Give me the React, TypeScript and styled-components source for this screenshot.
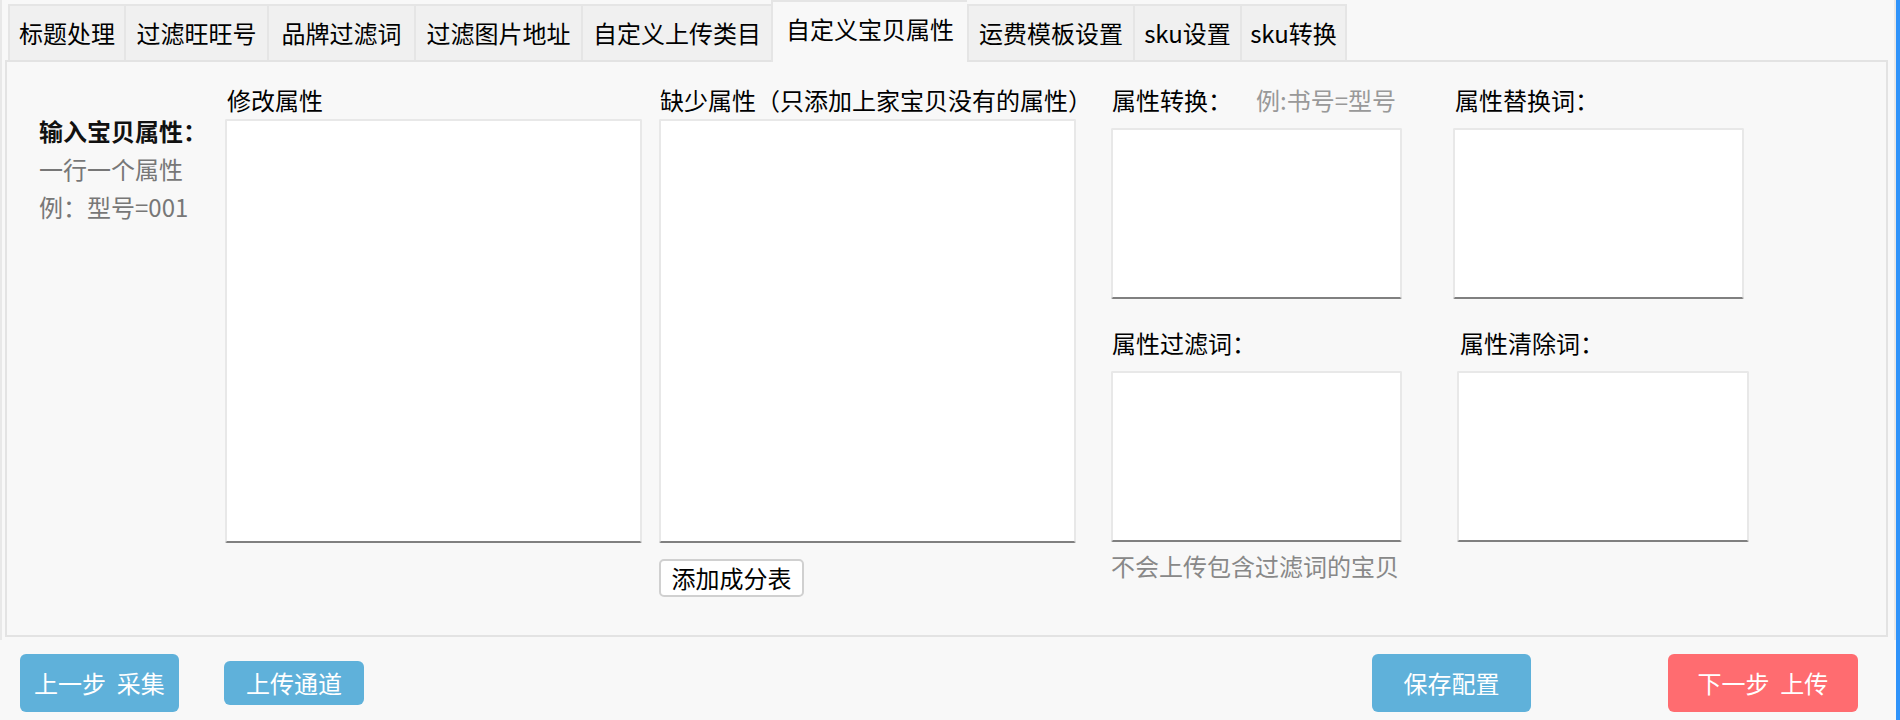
import styled, { createGlobalStyle } from "styled-components";

const GlobalStyle = createGlobalStyle`
  html, body {
    margin: 0;
    padding: 0;
    background: #f8f8f8;
  }
  body {
    font-family: "Noto Sans CJK SC", "Noto Sans", sans-serif;
    font-size: 24px;
    color: #000;
  }
  * {
    box-sizing: border-box;
  }
`;

const Page = styled.div`
  width: 1900px;
  height: 720px;
  overflow: hidden;
  background: #f8f8f8;
  border-right: 4px solid #2f93fa;
`;

const Frame = styled.div`
  height: 640px;
  padding: 0 6px 3px 3px;
  border-left: 2px solid #e8e8e8;
  border-right: 2px solid #e8e8e8;
`;

const TabBar = styled.div`
  display: flex;
  align-items: flex-end;
  height: 60px;
  padding-left: 3px;
`;

const Tab = styled.div<{ $w: number; $active?: boolean }>`
  width: ${(p) => p.$w}px;
  height: ${(p) => (p.$active ? 62 : 56)}px;
  margin-bottom: ${(p) => (p.$active ? -2 : 0)}px;
  display: flex;
  align-items: center;
  justify-content: center;
  padding-bottom: ${(p) => (p.$active ? 6 : 0)}px;
  background: ${(p) => (p.$active ? "#f8f8f8" : "#f0f0f0")};
  border: 2px solid #e5e5e5;
  border-bottom: none;
  border-right: none;
  white-space: nowrap;
  line-height: 1;
  position: relative;
  z-index: ${(p) => (p.$active ? 2 : 1)};

  &:last-child {
    border-right: 2px solid #e5e5e5;
  }
`;

const Panel = styled.div`
  height: 577px;
  border: 2px solid #e3e3e3;
  background: #f8f8f8;
  display: flex;
  align-items: flex-start;
  padding: 23px 0 0 32px;
`;

const HintColumn = styled.div`
  width: 186px;
  flex: none;
  margin-top: 27px;
  line-height: 38px;
`;

const HintTitle = styled.div`
  font-weight: 700;
  color: #111;
`;

const HintText = styled.div`
  color: #777;
`;

const Column = styled.div<{ $w: number; $mr?: number }>`
  display: flex;
  flex-direction: column;
  align-items: flex-start;
  width: ${(p) => p.$w}px;
  flex: none;
  margin-right: ${(p) => p.$mr ?? 0}px;
`;

const Label = styled.div<{ $indent?: number }>`
  height: 30px;
  line-height: 30px;
  white-space: nowrap;
  padding-left: ${(p) => p.$indent ?? 0}px;
`;

const Example = styled.span`
  color: #999;
  margin-left: 24px;
`;

const Area = styled.textarea<{ $w: number; $h: number; $mt: number }>`
  width: ${(p) => p.$w}px;
  height: ${(p) => p.$h}px;
  margin-top: ${(p) => p.$mt}px;
  background: #fff;
  border: 2px solid #e8e8e8;
  border-bottom: 2px solid #808080;
  border-radius: 2px;
  resize: none;
  outline: none;
  font: inherit;
`;

const SmallButton = styled.button`
  margin-top: 16px;
  width: 145px;
  height: 38px;
  background: #fff;
  border: 2px solid #d0d0d0;
  border-radius: 5px;
  font: inherit;
  color: #000;
  padding: 0;
  line-height: 1;
`;

const RightBlock = styled.div`
  display: flex;
  flex-direction: column;
`;

const RightRow = styled.div<{ $gap: number; $mt?: number }>`
  display: flex;
  gap: ${(p) => p.$gap}px;
  margin-top: ${(p) => p.$mt ?? 0}px;
`;

const Note = styled.div`
  margin-top: 9px;
  line-height: 30px;
  color: #888;
  white-space: nowrap;
`;

const BottomBar = styled.div`
  display: flex;
  align-items: center;
  height: 58px;
  margin-top: 14px;
  padding-left: 20px;
  padding-right: 38px;
`;

const ActionButton = styled.button<{ $w: number; $h: number; $red?: boolean; $ml?: number; $auto?: boolean }>`
  width: ${(p) => p.$w}px;
  height: ${(p) => p.$h}px;
  margin-left: ${(p) => (p.$auto ? "auto" : `${p.$ml ?? 0}px`)};
  background: ${(p) => (p.$red ? "#ff6c70" : "#5fb1da")};
  color: #fff;
  border: none;
  border-radius: 6px;
  font: inherit;
  padding: 0;
  line-height: 1;
  white-space: pre;
`;

const tabs = [
  { label: "标题处理", w: 116 },
  { label: "过滤旺旺号", w: 143 },
  { label: "品牌过滤词", w: 147 },
  { label: "过滤图片地址", w: 167 },
  { label: "自定义上传类目", w: 190 },
  { label: "自定义宝贝属性", w: 196, active: true },
  { label: "运费模板设置", w: 166 },
  { label: "sku设置", w: 107 },
  { label: "sku转换", w: 107 },
];

export default function App() {
  return (
    <Page>
      <GlobalStyle />
      <Frame>
        <TabBar>
          {tabs.map((t) => (
            <Tab key={t.label} $w={t.w} $active={t.active}>
              {t.label}
            </Tab>
          ))}
        </TabBar>
        <Panel>
          <HintColumn>
            <HintTitle>输入宝贝属性：</HintTitle>
            <HintText>一行一个属性</HintText>
            <HintText>例：型号=001</HintText>
          </HintColumn>
          <Column $w={417} $mr={17}>
            <Label $indent={2}>修改属性</Label>
            <Area $w={417} $h={424} $mt={4} />
          </Column>
          <Column $w={417} $mr={35}>
            <Label $indent={1}>缺少属性（只添加上家宝贝没有的属性）</Label>
            <Area $w={417} $h={424} $mt={4} />
            <SmallButton>添加成分表</SmallButton>
          </Column>
          <RightBlock>
            <RightRow $gap={51}>
              <Column $w={291}>
                <Label $indent={1}>
                  属性转换：<Example>例:书号=型号</Example>
                </Label>
                <Area $w={291} $h={171} $mt={13} />
              </Column>
              <Column $w={291}>
                <Label $indent={2}>属性替换词：</Label>
                <Area $w={291} $h={171} $mt={13} />
              </Column>
            </RightRow>
            <RightRow $gap={55} $mt={29}>
              <Column $w={291}>
                <Label $indent={1}>属性过滤词：</Label>
                <Area $w={291} $h={171} $mt={13} />
                <Note>不会上传包含过滤词的宝贝</Note>
              </Column>
              <Column $w={292}>
                <Label $indent={3}>属性清除词：</Label>
                <Area $w={292} $h={171} $mt={13} />
              </Column>
            </RightRow>
          </RightBlock>
        </Panel>
      </Frame>
      <BottomBar>
        <ActionButton $w={159} $h={58}>上一步  采集</ActionButton>
        <ActionButton $w={140} $h={44} $ml={45}>上传通道</ActionButton>
        <ActionButton $w={159} $h={58} $auto>保存配置</ActionButton>
        <ActionButton $w={190} $h={58} $ml={137} $red>下一步  上传</ActionButton>
      </BottomBar>
    </Page>
  );
}
